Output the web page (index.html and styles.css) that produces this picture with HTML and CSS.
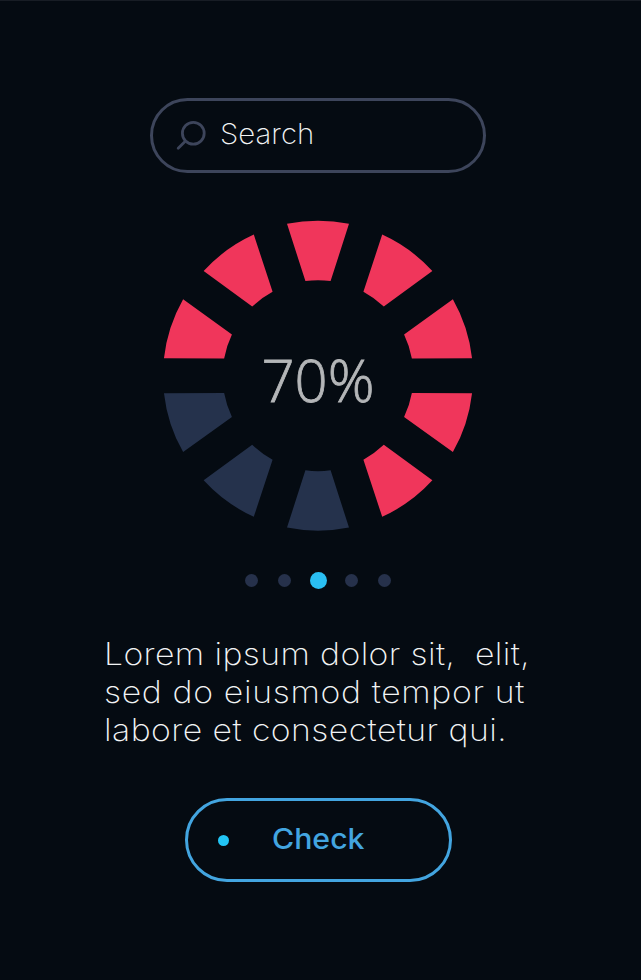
FILE: index.html
```html
<!DOCTYPE html>
<html lang="en">
<head>
<meta charset="utf-8">
<title>Progress</title>
<link rel="stylesheet" href="styles.css">
</head>
<body>
<main class="screen">
  <div class="search">
    <svg class="search-icon" viewBox="0 0 30 30"><circle cx="17.3" cy="12.3" r="10.9"/><path d="M9.3 20.2 2.2 27.3"/></svg>
    <span class="search-label">Search</span>
  </div>
  <div class="gauge">
    <svg class="ring" viewBox="-156 -155.7 312 312">
      <defs><path id="seg" d="M-31-151.9A155 155 0 0 1 31-151.9L12.6-94.6A95.4 95.4 0 0 0-12.6-94.6Z"/></defs>
      <g class="on">
        <use href="#seg" transform="rotate(-72)"/>
        <use href="#seg" transform="rotate(-36)"/>
        <use href="#seg"/>
        <use href="#seg" transform="rotate(36)"/>
        <use href="#seg" transform="rotate(72)"/>
        <use href="#seg" transform="rotate(108)"/>
        <use href="#seg" transform="rotate(144)"/>
      </g>
      <g class="off">
        <use href="#seg" transform="rotate(180)"/>
        <use href="#seg" transform="rotate(216)"/>
        <use href="#seg" transform="rotate(252)"/>
      </g>
    </svg>
    <span class="percent">70%</span>
  </div>
  <div class="dots"><i></i><i></i><i class="current"></i><i></i><i></i></div>
  <p class="copy">
    <span class="line line-1">Lorem ipsum dolor sit,&nbsp; elit,</span>
    <span class="line line-2">sed do eiusmod tempor ut</span>
    <span class="line line-3">labore et consectetur qui.</span>
  </p>
  <button class="check"><i class="check-dot"></i><span class="check-label">Check</span></button>
</main>
</body>
</html>
```
FILE: styles.css
```css
* { box-sizing: border-box; }
body { margin: 0; background: #050b12; }
.screen {
  height: 980px;
  padding: 97px 5px 0 0;
  border-top: 1px solid #181d25;
  display: flex;
  flex-direction: column;
  align-items: center;
  font-family: Inter, "Liberation Sans", sans-serif;
  color: #f2f4f5;
}
.search {
  width: 336px;
  height: 75px;
  border: 3px solid #3d455b;
  border-radius: 38px;
  display: flex;
  align-items: center;
  padding-left: 23px;
}
.search-icon {
  width: 30px;
  height: 30px;
  fill: none;
  stroke: #3d455b;
  stroke-width: 2.8;
  stroke-linecap: round;
}
.search-label {
  margin-left: 14px;
  padding-bottom: 3px;
  font-size: 28px;
  font-weight: 250;
  line-height: 34px;
  transform: scaleX(1.05);
  transform-origin: left;
}
.gauge {
  display: grid;
  place-items: center;
  margin-top: 47px;
  width: 312px;
  height: 312px;
}
.ring, .percent { grid-area: 1 / 1; }
.ring { width: 312px; height: 312px; }
.on { fill: #f0365b; }
.off { fill: #25324c; }
.percent {
  font: 300 58px/70px "Open Sans", "Noto Sans", sans-serif;
  color: #b4b6b8;
  -webkit-text-stroke: 0.8px #b4b6b8;
  padding-top: 8px;
}
.dots {
  display: flex;
  align-items: center;
  gap: 20.2px;
  height: 17px;
  margin-top: 40px;
}
.dots i { width: 13px; height: 13px; border-radius: 50%; background: #26314b; }
.dots .current { width: 17px; height: 17px; margin: 0 -2px; background: #2abff3; }
.copy {
  width: 428px;
  margin: 46px 0 0;
  font-size: 31px;
  font-weight: 220;
  line-height: 38px;
}
.line {
  display: block;
  white-space: nowrap;
  transform: scaleX(1.09);
  transform-origin: left;
}
.line-1 { letter-spacing: 0.35px; }
.line-2 { letter-spacing: 0.6px; }
.line-3 { letter-spacing: 0.4px; }
.check {
  width: 267px;
  height: 84px;
  margin-top: 49px;
  padding: 0 0 0 30px;
  border: 3px solid #43a5e0;
  border-radius: 42px;
  background: transparent;
  display: flex;
  align-items: center;
  font-family: inherit;
  color: #43a5e0;
}
.check-dot { width: 11px; height: 11px; border-radius: 50%; background: #22c5f5; }
.check-label {
  margin-left: 43px;
  padding-bottom: 2px;
  font-size: 28px;
  font-weight: 460;
  line-height: 34px;
  transform: scaleX(1.08);
  transform-origin: left;
}
```
